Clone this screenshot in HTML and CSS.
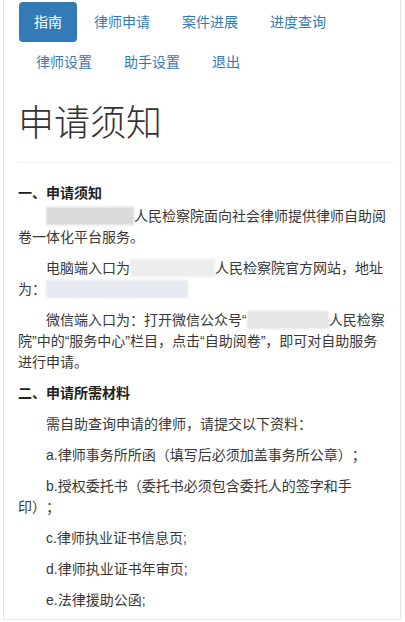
FILE: index.html
```html
<!DOCTYPE html>
<html lang="zh-CN">
<head>
<meta charset="utf-8">
<title>申请须知</title>
<link rel="stylesheet" href="styles.css">
</head>
<body>
<div class="frame">
  <ul class="nav">
    <li class="active"><a>指南</a></li>
    <li><a>律师申请</a></li>
    <li><a>案件进展</a></li>
    <li><a>进度查询</a></li>
    <li><a>律师设置</a></li>
    <li><a>助手设置</a></li>
    <li><a>退出</a></li>
  </ul>
  <div class="content">
    <h1 class="title">申请须知</h1>
    <p class="sec first">一、申请须知</p>
    <p class="ind"><span class="blur b1"></span>人民检察院面向社会律师提供律师自助阅卷一体化平台服务。</p>
    <p class="ind">电脑端入口为<span class="blur b2"></span>人民检察院官方网站，地址为：<span class="blur b3"></span></p>
    <p class="ind">微信端入口为：打开微信公众号“<span class="blur b4"></span>人民检察院”中的“服务中心”栏目，点击“自助阅卷”，即可对自助服务进行申请。</p>
    <p class="sec">二、申请所需材料</p>
    <p class="ind">需自助查询申请的律师，请提交以下资料：</p>
    <p class="ind">a.律师事务所所函（填写后必须加盖事务所公章）；</p>
    <p class="ind">b.授权委托书（委托书必须包含委托人的签字和手印）；</p>
    <p class="ind">c.律师执业证书信息页;</p>
    <p class="ind">d.律师执业证书年审页;</p>
    <p class="ind">e.法律援助公函;</p>
  </div>
</div>
</body>
</html>
```

FILE: styles.css
```css
* { box-sizing: border-box; }
html, body { margin: 0; padding: 0; background: #fff; }
body {
  font-family: "Liberation Sans", "Noto Sans CJK SC", sans-serif;
  font-size: 14px;
  color: #383838;
  text-spacing-trim: space-all;
}
.frame {
  margin-left: 3px;
  width: 398px;
  height: 620px;
  border: 1px solid #e6e6e6;
  border-top: none;
  padding-top: 2px;
  overflow: hidden;
}
.nav {
  list-style: none;
  margin: 0 0 0 15px;
  padding: 0;
  display: flex;
  flex-wrap: wrap;
  width: 376px;
}
.nav li + li { margin-left: 2px; }
.nav a {
  display: block;
  padding: 10px 15px;
  line-height: 20px;
  color: #337ab7;
  border-radius: 4px;
}
.nav li.active a {
  background: #337ab7;
  color: #fff;
}
.content {
  padding: 0 9px 0 14px;
}
.title {
  font-size: 36px;
  font-weight: 300;
  line-height: 40px;
  margin: 22px -2px 0 0;
  padding-bottom: 18px;
  border-bottom: 1px solid #eee;
  color: #333;
}
p {
  margin: 0 0 10px;
  line-height: 21px;
}
.sec {
  font-weight: 700;
  color: #222;
}
.sec.first {
  margin-top: 20px;
  margin-bottom: 2px;
}
.ind { text-indent: 2em; }
.ind + .ind { margin-top: 1px; }
.blur {
  display: inline-block;
  vertical-align: -4px;
  height: 18px;
  text-indent: 0;
  filter: blur(1px);
}
.b1 { width: 88px; background: #dadada; }
.b2 { width: 85px; background: #ededed; }
.b3 { width: 142px; background: #e6eaf0; }
.b4 { width: 82px; background: #e6e6e6; }
```
